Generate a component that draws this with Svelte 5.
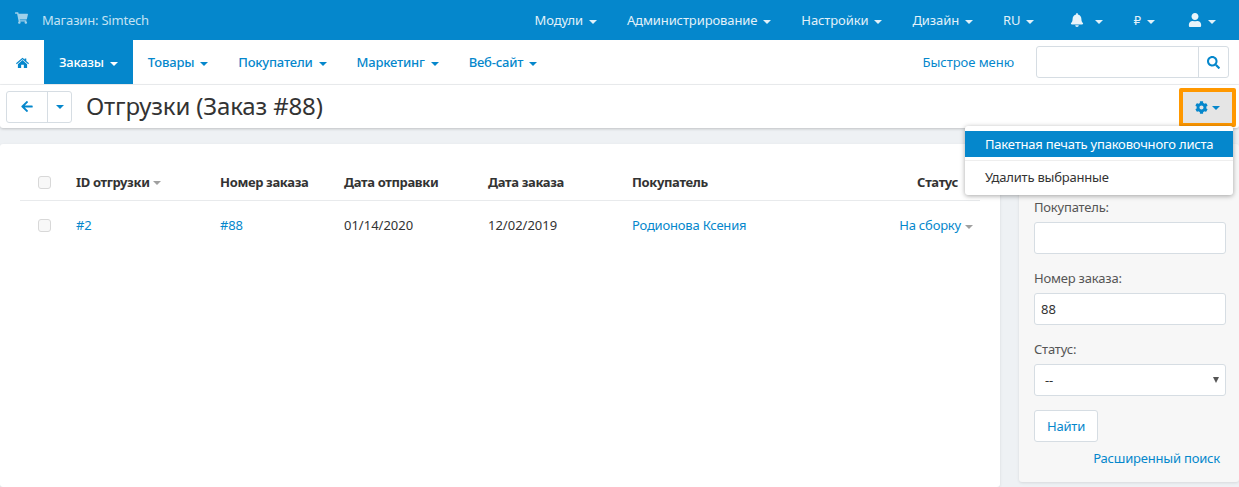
<script lang="ts">
const topMenus = ["Модули", "Администрирование", "Настройки", "Дизайн", "RU"];
const navItems = ["Заказы", "Товары", "Покупатели", "Маркетинг", "Веб-сайт"];
const columns = [
	{ label: "ID отгрузки", width: 144, sort: true },
	{ label: "Номер заказа", width: 124 },
	{ label: "Дата отправки", width: 144 },
	{ label: "Дата заказа", width: 144 }
];
</script>

<div class="page">
	<header class="topbar">
		<div class="store">
			<svg class="cart" viewBox="0 0 576 512"><path d="M528.12 301.319l47.273-208C578.806 78.301 567.391 64 551.99 64H159.208l-9.166-44.81C147.758 8.021 137.93 0 126.529 0H24C10.745 0 0 10.745 0 24v16c0 13.255 10.745 24 24 24h69.883l70.248 343.435C147.325 417.1 136 435.222 136 456c0 30.928 25.072 56 56 56s56-25.072 56-56c0-15.674-6.447-29.835-16.824-40h209.647C430.447 426.165 424 440.326 424 456c0 30.928 25.072 56 56 56s56-25.072 56-56c0-22.172-12.888-41.332-31.579-50.405l5.517-24.276c3.413-15.018-8.002-29.319-23.403-29.319H218.117l-6.545-32h293.145c11.206 0 20.92-7.754 23.403-18.681z"/></svg>
			<span>Магазин: Simtech</span>
		</div>
		<div class="top-menus">
			{#each topMenus as menu}
				<span class="top-item">{menu}<i class="caret"></i></span>
			{/each}
			<span class="top-item bell-item">
				<svg class="bell" viewBox="0 0 448 512"><path d="M224 512c35.32 0 63.97-28.65 63.97-64H160.03c0 35.35 28.65 64 63.97 64zm215.39-149.71c-19.32-20.76-55.47-51.99-55.47-154.29 0-77.7-54.48-139.9-127.94-155.16V32c0-17.67-14.32-32-31.98-32s-31.98 14.33-31.98 32v20.84C118.56 68.1 64.08 130.3 64.08 208c0 102.3-36.15 133.53-55.47 154.29-6 6.45-8.66 14.16-8.61 21.71.11 16.4 12.98 32 32.1 32h383.8c19.12 0 32-15.6 32.1-32 .05-7.55-2.61-15.27-8.61-21.71z"/></svg><i class="caret wide"></i>
			</span>
			<span class="top-item"><span class="ruble">₽</span><i class="caret"></i></span>
			<span class="top-item user-item">
				<svg class="user" viewBox="0 0 448 512"><path d="M224 256c70.7 0 128-57.3 128-128S294.7 0 224 0 96 57.3 96 128s57.3 128 128 128zm89.6 32h-16.7c-22.2 10.2-46.9 16-72.9 16s-50.6-5.8-72.9-16h-16.7C60.2 288 0 348.2 0 422.4V464c0 26.5 21.5 48 48 48h352c26.5 0 48-21.5 48-48v-41.6c0-74.2-60.2-134.4-134.4-134.4z"/></svg><i class="caret"></i>
			</span>
		</div>
	</header>

	<nav class="navbar">
		<span class="home">
			<svg viewBox="0 0 24 20"><path d="M12 1 L16 4.6 V2.5 H19 V7.3 L24 11.6 L22.6 13.2 L12 4 L1.4 13.2 L0 11.6 Z M12 5.6 L20.5 13 V20 H14.5 V14 H9.5 V20 H3.5 V13 Z"/></svg>
		</span>
		{#each navItems as item, i}
			<span class="nav-item" class:active={i === 0}>{item}<i class="caret"></i></span>
		{/each}
		<span class="quick">Быстрое меню</span>
		<div class="nav-search">
			<span class="search-field"></span>
			<span class="search-btn">
				<svg viewBox="0 0 512 512"><path d="M505 442.7L405.3 343c-4.5-4.5-10.6-7-17-7H372c27.6-35.3 44-79.7 44-128C416 93.1 322.9 0 208 0S0 93.1 0 208s93.1 208 208 208c48.3 0 92.7-16.4 128-44v16.3c0 6.4 2.5 12.5 7 17l99.7 99.7c9.4 9.4 24.6 9.4 33.9 0l28.3-28.3c9.4-9.4 9.4-24.6.1-34zM208 336c-70.7 0-128-57.2-128-128 0-70.7 57.2-128 128-128 70.7 0 128 57.2 128 128 0 70.7-57.2 128-128 128z"/></svg>
			</span>
		</div>
	</nav>

	<div class="titlebar">
		<div class="back-group">
			<span class="back">
				<svg viewBox="0 0 448 512"><path d="M257.5 445.1l-22.2 22.2c-9.4 9.4-24.6 9.4-33.9 0L7 273c-9.4-9.4-9.4-24.6 0-33.9L201.4 44.7c9.4-9.4 24.6-9.4 33.9 0l22.2 22.2c9.5 9.5 9.3 25-.4 34.3L136.6 216H424c13.3 0 24 10.7 24 24v32c0 13.3-10.7 24-24 24H136.6l120.5 114.8c9.8 9.3 10 24.8.4 34.3z"/></svg>
			</span>
			<span class="back-more"><i class="caret"></i></span>
		</div>
		<h1>Отгрузки (Заказ #88)</h1>
		<span class="gear">
			<svg viewBox="0 0 512 512"><path d="M487.4 315.7l-42.6-24.6c4.3-23.2 4.3-47 0-70.2l42.6-24.6c4.9-2.8 7.1-8.6 5.5-14-11.1-35.6-30-67.8-54.7-94.6-3.8-4.1-10-5.1-14.8-2.3L380.8 110c-17.9-15.4-38.5-27.3-60.8-35.1V25.8c0-5.6-3.9-10.5-9.4-11.7-36.7-8.2-74.3-7.8-109.2 0-5.5 1.2-9.4 6.1-9.4 11.7V75c-22.2 7.9-42.8 19.8-60.8 35.1L88.7 85.5c-4.9-2.8-11-1.9-14.8 2.3-24.7 26.7-43.6 58.9-54.7 94.6-1.7 5.4.6 11.2 5.5 14L67.3 221c-4.3 23.2-4.3 47 0 70.2l-42.6 24.6c-4.9 2.8-7.1 8.6-5.5 14 11.1 35.6 30 67.8 54.7 94.6 3.8 4.1 10 5.1 14.8 2.3l42.6-24.6c17.9 15.4 38.5 27.3 60.8 35.1v49.2c0 5.6 3.9 10.5 9.4 11.7 36.7 8.2 74.3 7.8 109.2 0 5.5-1.2 9.4-6.1 9.4-11.7v-49.2c22.2-7.9 42.8-19.8 60.8-35.1l42.6 24.6c4.9 2.8 11 1.9 14.8-2.3 24.7-26.7 43.6-58.9 54.7-94.6 1.5-5.5-.7-11.3-5.6-14.1zM256 336c-44.1 0-80-35.9-80-80s35.9-80 80-80 80 35.9 80 80-35.9 80-80 80z"/></svg><i class="caret"></i>
		</span>
		<div class="dropdown">
			<div class="drop-item selected">Пакетная печать упаковочного листа</div>
			<div class="drop-sep"></div>
			<div class="drop-item">Удалить выбранные</div>
		</div>
	</div>

	<div class="content">
		<main class="panel">
			<div class="row head">
				<span class="check-cell"><span class="check"></span></span>
				{#each columns as col}
					<span class="cell" style="width: {col.width}px">{col.label}{#if col.sort}<i class="caret grey"></i>{/if}</span>
				{/each}
				<span class="cell buyer">Покупатель</span>
				<span class="cell status">Статус</span>
			</div>
			<div class="row body">
				<span class="check-cell"><span class="check"></span></span>
				<span class="cell link" style="width: 144px">#2</span>
				<span class="cell link" style="width: 124px">#88</span>
				<span class="cell date" style="width: 144px">01/14/2020</span>
				<span class="cell date" style="width: 144px">12/02/2019</span>
				<span class="cell buyer link">Родионова Ксения</span>
				<span class="cell status link">На сборку<i class="caret grey"></i></span>
			</div>
		</main>
		<aside class="side">
			<label for="f-buyer">Покупатель:</label>
			<input id="f-buyer" type="text" />
			<label for="f-order">Номер заказа:</label>
			<input id="f-order" type="text" value="88" />
			<label for="f-status">Статус:</label>
			<div class="select" id="f-status"><span>--</span><i class="sel-arrow"></i></div>
			<span class="find">Найти</span>
			<span class="advanced">Расширенный поиск</span>
		</aside>
	</div>
</div>

<style>
:global(body) {
	margin: 0;
}
.page {
	width: 1239px;
	height: 487px;
	overflow: hidden;
	position: relative;
	background: #eef1f4;
	font-family: "Noto Sans", sans-serif;
	font-size: 13px;
	letter-spacing: -0.2px;
	color: #333;
}
.caret {
	display: inline-block;
	width: 0;
	height: 0;
	margin-left: 6px;
	vertical-align: middle;
	border-left: 4px solid transparent;
	border-right: 4px solid transparent;
	border-top: 4px solid currentColor;
}
.caret.wide {
	margin-left: 11px;
}
.caret.grey {
	color: #a0a0a0;
	margin-left: 3px;
	border-left-width: 4.5px;
	border-right-width: 4.5px;
}

.topbar {
	height: 40px;
	background: #0587cc;
	display: flex;
	align-items: center;
	justify-content: space-between;
	color: #fff;
}
.store {
	display: flex;
	align-items: center;
	padding-left: 15px;
	color: #c3e2f3;
}
.cart {
	width: 13px;
	height: 12px;
	fill: #9fd0ea;
	margin-right: 14px;
	margin-top: -4px;
}
.top-menus {
	display: flex;
	align-items: center;
	padding-right: 23px;
}
.top-item {
	color: #e2f1f9;
	margin-left: 30px;
	letter-spacing: -0.1px;
}
.top-item:first-child {
	margin-left: 0;
}
.bell-item {
	margin-left: 36px;
}
.user-item {
	margin-left: 33px;
}
.bell,
.user {
	width: 14px;
	height: 14px;
	fill: #e8f4fa;
	vertical-align: -2px;
}
.ruble {
	font-family: "DejaVu Sans", sans-serif;
	font-size: 12px;
}

.navbar {
	height: 44px;
	background: #fff;
	display: flex;
	align-items: center;
	border-bottom: 1px solid #eef0f2;
}
.home {
	width: 44px;
	display: flex;
	justify-content: center;
}
.home svg {
	width: 13px;
	height: 11px;
	fill: #0587cc;
}
.nav-item {
	height: 44px;
	line-height: 44px;
	padding: 0 15px;
	color: #0587cc;
	font-weight: 500;
}
.nav-item.active {
	background: #0587cc;
	color: #fff;
}
.quick {
	margin-left: auto;
	letter-spacing: -0.05px;
	color: #0587cc;
}
.nav-search {
	display: flex;
	width: 193px;
	height: 32px;
	margin: 0 10px 0 22px;
	box-sizing: border-box;
	border: 1px solid #d6dde3;
	border-radius: 3px;
	background: #fff;
}
.search-field {
	flex: 1;
	border-right: 1px solid #d6dde3;
}
.search-btn {
	width: 29px;
	display: flex;
	align-items: center;
	justify-content: center;
}
.search-btn svg {
	width: 13px;
	height: 13px;
	fill: #0587cc;
}

.titlebar {
	height: 43px;
	background: #fff;
	display: flex;
	align-items: center;
	position: relative;
	box-shadow: 0 1px 3px rgba(0, 0, 0, 0.2);
	border-radius: 0 0 3px 3px;
}
.back-group {
	display: flex;
	height: 32px;
	margin-left: 6px;
	box-sizing: border-box;
	border: 1px solid #d6dde3;
	border-radius: 3px;
}
.back {
	width: 40px;
	display: flex;
	align-items: center;
	justify-content: center;
	border-right: 1px solid #d6dde3;
}
.back svg {
	width: 12px;
	height: 13px;
	fill: #0587cc;
}
.back-more {
	width: 24px;
	margin-right: -1px;
	display: flex;
	align-items: center;
	justify-content: center;
	color: #0587cc;
}
.back-more .caret {
	margin: 0;
}
h1 {
	margin: -3px 0 0 14px;
	font-size: 24px;
	font-weight: 400;
	letter-spacing: -0.15px;
	color: #333;
}
.gear {
	position: absolute;
	right: 3px;
	top: 3px;
	width: 57px;
	height: 39px;
	box-sizing: border-box;
	background: #e5e5e5;
	border: 4px solid #ff9800;
	border-radius: 2px;
	display: flex;
	align-items: center;
	justify-content: center;
	color: #0587cc;
}
.gear svg {
	width: 13px;
	height: 13px;
	fill: #0587cc;
}
.gear .caret {
	margin-left: 4px;
}
.dropdown {
	position: absolute;
	top: 41px;
	left: 965px;
	width: 268px;
	padding: 5px 0;
	box-sizing: border-box;
	background: #fff;
	border-radius: 3px;
	box-shadow: 0 1px 5px rgba(0, 0, 0, 0.35);
	z-index: 5;
}
.drop-item {
	height: 26px;
	line-height: 26px;
	padding-left: 20px;
	color: #333;
}
.drop-item.selected {
	background: #0587cc;
	color: #fff;
}
.drop-sep {
	height: 1px;
	background: #eee;
	margin: 3px 0;
}

.content {
	display: flex;
	justify-content: space-between;
	margin-top: 16px;
}
.panel {
	width: 1000px;
	height: 343px;
	box-sizing: border-box;
	padding: 18px 20px 0;
	background: #fff;
	border-radius: 3px;
	box-shadow: 0 1px 3px rgba(0, 0, 0, 0.1);
}
.row {
	display: flex;
	align-items: center;
}
.row.head {
	height: 36px;
	font-weight: 700;
	letter-spacing: -0.35px;
	color: #333;
	border-bottom: 1px solid #e8eaec;
	padding-top: 2px;
}
.row.body {
	height: 48px;
}
.check-cell {
	width: 56px;
	padding-left: 18px;
	box-sizing: border-box;
}
.check {
	display: block;
	width: 13px;
	height: 13px;
	box-sizing: border-box;
	border: 1px solid #d8d8d8;
	border-radius: 3px;
	background: #f8f8f8;
}
.cell {
	flex: none;
}
.date {
	letter-spacing: 0;
}
.link {
	color: #0587cc;
}
.buyer {
	width: 200px;
}
.status {
	flex: 1;
	text-align: right;
	padding-right: 22px;
}
.row.body .status {
	padding-right: 7px;
}
.row.body .status .caret {
	margin-left: 4px;
}
.side {
	width: 220px;
	height: 338px;
	box-sizing: border-box;
	padding: 54px 13px 0 15px;
	background: #f7f7f7;
	border-radius: 3px;
	box-shadow: 0 1px 3px rgba(0, 0, 0, 0.1);
	display: flex;
	flex-direction: column;
	align-items: flex-start;
}
.side label {
	color: #555;
	line-height: 18px;
	margin-bottom: 6px;
}
.side input {
	width: 192px;
	height: 32px;
	box-sizing: border-box;
	margin-bottom: 15px;
	padding: 0 6px;
	border: 1px solid #d6dde3;
	border-radius: 3px;
	background: #fff;
	font: inherit;
	color: #333;
}
.select {
	width: 192px;
	height: 32px;
	box-sizing: border-box;
	margin-bottom: 14px;
	padding: 0 6px 0 10px;
	border: 1px solid #d6dde3;
	border-radius: 3px;
	background: #fff;
	display: flex;
	align-items: center;
	justify-content: space-between;
}
.sel-arrow {
	border-left: 3px solid transparent;
	border-right: 3px solid transparent;
	border-top: 6px solid #555;
}
.find {
	width: 64px;
	height: 32px;
	line-height: 30px;
	box-sizing: border-box;
	text-align: center;
	background: #fff;
	border: 1px solid #d6dde3;
	border-radius: 3px;
	color: #0587cc;
}
.advanced {
	align-self: flex-end;
	margin-top: 7px;
	margin-right: 6px;
	color: #0587cc;
}
</style>
